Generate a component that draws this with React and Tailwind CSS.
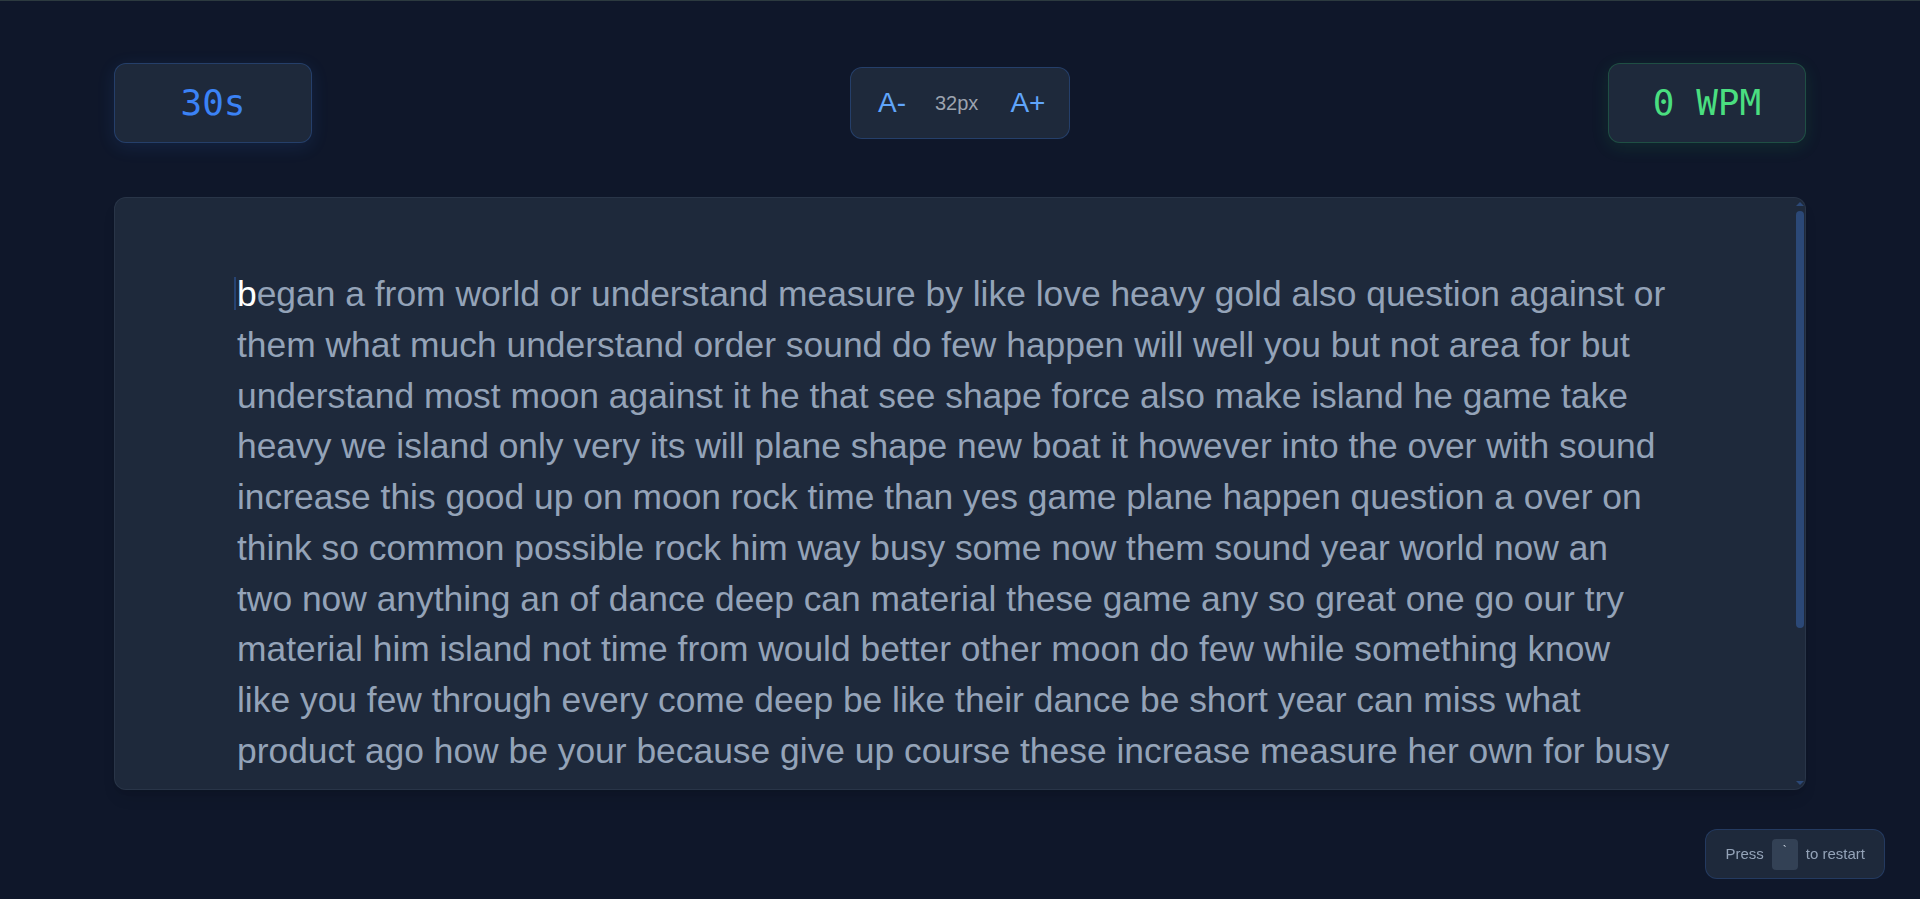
import React, { useState } from "react";

const lines = [
  "began a from world or understand measure by like love heavy gold also question against or",
  "them what much understand order sound do few happen will well you but not area for but",
  "understand most moon against it he that see shape force also make island he game take",
  "heavy we island only very its will plane shape new boat it however into the over with sound",
  "increase this good up on moon rock time than yes game plane happen question a over on",
  "think so common possible rock him way busy some now them sound year world now an",
  "two now anything an of dance deep can material these game any so great one go our try",
  "material him island not time from would better other moon do few while something know",
  "like you few through every come deep be like their dance be short year can miss what",
  "product ago how be your because give up course these increase measure her own for busy",
  "one large down hold ice plane give happen them their move even that early thing well",
  "would most order gold more long people such how find sentence back show first shape",
  "world word high large every side also house after old kind school late point never",
];

export default function App() {
  const [fontSize] = useState(32);
  const first = lines[0];

  return (
    <div className="min-h-screen bg-[#0f172a] font-['Liberation_Sans',Arial,sans-serif]">
      <div className="h-px bg-[#2c3a3f]" />
      <div className="w-[1692px] mx-auto pt-[62px]">
        <div className="flex items-center justify-between h-[80px]">
          <div className="w-[198px] h-[80px] rounded-xl bg-[#1e293b] border border-[#3b82f6]/25 shadow-[0_4px_18px_rgba(59,130,246,0.12)] flex items-center justify-center font-['DejaVu_Sans_Mono',monospace] text-4xl text-[#3b82f6]">
            30s
          </div>
          <div className="w-[220px] h-[72px] rounded-xl bg-[#1e293b] border border-[#3b82f6]/25 flex items-center pl-[15px]">
            <button className="px-3 text-[28px] text-[#60a5fa] leading-none">A-</button>
            <span className="ml-[17px] text-xl text-[#9ca3af]">{fontSize}px</span>
            <button className="ml-[20px] px-3 text-[28px] text-[#60a5fa] leading-none">A+</button>
          </div>
          <div className="w-[198px] h-[80px] rounded-xl bg-[#1e293b] border border-[#22c55e]/25 shadow-[0_4px_18px_rgba(34,197,94,0.12)] flex items-center justify-center font-['DejaVu_Sans_Mono',monospace] text-4xl text-[#4ade80]">
            0 WPM
          </div>
        </div>

        <div className="relative mt-[54px] h-[593px] rounded-xl bg-[#1e293b] border border-[#334155]/50 shadow-lg overflow-hidden">
          <div className="h-[578px] overflow-hidden pt-[71px] pl-[122px] text-[35.4px] leading-[50.75px] text-[#94a3b8] whitespace-nowrap">
            {lines.map((line, i) => (
              <div key={i}>
                {i === 0 ? (
                  <>
                    <span className="relative text-white">
                      <span className="absolute left-[-3px] top-[3px] w-[2px] h-[33px] bg-[#3b82f6]/30" />
                      {first[0]}
                    </span>
                    {first.slice(1)}
                  </>
                ) : (
                  line
                )}
              </div>
            ))}
          </div>

          {/* scrollbar */}
          <div className="absolute right-[1px] top-[4px] bottom-[4px] w-[8px] flex flex-col items-center">
            <div className="w-0 h-0 border-x-[4px] border-x-transparent border-b-[4px] border-b-[#2b4877]" />
            <div className="mt-[5px] w-[8px] h-[417px] rounded-full bg-[#2b4877]" />
            <div className="flex-1" />
            <div className="w-0 h-0 border-x-[4px] border-x-transparent border-t-[4px] border-t-[#2b4877]" />
          </div>
        </div>
      </div>

      <div className="fixed right-[35px] bottom-5 h-[50px] px-[19px] rounded-xl bg-[#1e293b] border border-[#3b82f6]/20 flex items-center gap-2 text-[15px] text-[#94a3b8]">
        <span>Press</span>
        <kbd className="w-[26px] h-[31px] rounded bg-[#334155] text-[#cbd5e1] text-xs flex justify-center pt-1 font-['Liberation_Sans',sans-serif]">
          `
        </kbd>
        <span>to restart</span>
      </div>
    </div>
  );
}
